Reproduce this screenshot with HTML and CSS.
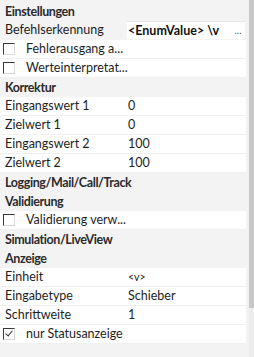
FILE: index.html
```html
<!DOCTYPE html>
<html>
<head>
    <meta charset="utf-8">
    <title>Eigenschaften</title>
    <link rel="stylesheet" href="styles.css">
</head>
<body>

<div class="grid_box">
    <div class="prop_list">
        <div class="cat">Einstellungen</div>
        <div class="row row_sel">
            <div class="lbl">Befehlserkennung</div>
            <div class="val val_edit"><b>&lt;EnumValue&gt; \v</b><span class="dots">...</span></div>
        </div>
        <div class="row">
            <div class="lbl chk_lbl"><span class="chk"></span>Fehlerausgang a...</div>
            <div class="val"></div>
        </div>
        <div class="row">
            <div class="lbl chk_lbl"><span class="chk"></span>Werteinterpretat...</div>
            <div class="val"></div>
        </div>
        <div class="cat">Korrektur</div>
        <div class="row">
            <div class="lbl">Eingangswert 1</div>
            <div class="val">0</div>
        </div>
        <div class="row">
            <div class="lbl">Zielwert 1</div>
            <div class="val">0</div>
        </div>
        <div class="row">
            <div class="lbl">Eingangswert 2</div>
            <div class="val">100</div>
        </div>
        <div class="row">
            <div class="lbl">Zielwert 2</div>
            <div class="val">100</div>
        </div>
        <div class="cat">Logging/Mail/Call/Track</div>
        <div class="cat">Validierung</div>
        <div class="row">
            <div class="lbl chk_lbl"><span class="chk"></span>Validierung verw...</div>
            <div class="val"></div>
        </div>
        <div class="cat">Simulation/LiveView</div>
        <div class="cat">Anzeige</div>
        <div class="row">
            <div class="lbl">Einheit</div>
            <div class="val small">&lt;v&gt;</div>
        </div>
        <div class="row">
            <div class="lbl">Eingabetype</div>
            <div class="val">Schieber</div>
        </div>
        <div class="row">
            <div class="lbl">Schrittweite</div>
            <div class="val">1</div>
        </div>
        <div class="row">
            <div class="lbl chk_lbl"><span class="chk chk_on"></span>nur Statusanzeige</div>
            <div class="val"></div>
        </div>
    </div>
    <div class="scroll_bar">
        <div class="scroll_thumb"></div>
    </div>
</div>

</body>
</html>
```

FILE: styles.css
```css
html, body{
    margin:0;
    padding:0;
    background:#f3f3f3;
}
body{
    font-family:Lato, "Noto Sans", sans-serif;
    font-size:12.5px;
    color:#1e1e1e;
}
.grid_box{
    display:flex;
    height:357px;
}
.prop_list{
    flex:1;
    padding-top:2px;
    padding-right:2px;
}
.cat{
    height:19px;
    line-height:19px;
    padding-left:5px;
    letter-spacing:-0.4px;
    font-weight:bold;
    color:#2b2b2b;
    white-space:nowrap;
}
.row{
    display:flex;
    height:18px;
    line-height:18px;
    border-bottom:1px solid #f0f0f0;
    background:#fff;
}
.lbl{
    width:122px;
    padding-left:5px;
    white-space:nowrap;
}
.val{
    flex:1;
    padding-left:1px;
    white-space:nowrap;
    overflow:hidden;
}
.small{
    font-size:10.5px;
}
.row_sel{
    background:#f3f3f3;
    border-bottom-color:#f3f3f3;
}
.val_edit{
    display:flex;
    background:#fff;
    border-top:1px solid #e6e6e6;
    margin-right:1px;
    line-height:17px;
}
.val_edit b{
    flex:1;
    color:#111;
}
.dots{
    width:14px;
    font-size:10px;
    color:#555;
    text-align:center;
}
.chk_lbl{
    display:flex;
    align-items:center;
    padding-left:3px;
    width:124px;
}
.chk{
    width:10px;
    height:10px;
    border-top:1px solid #3a3a3a;
    border-left:1px solid #3a3a3a;
    border-right:1px solid #d8d8d8;
    border-bottom:1px solid #d8d8d8;
    margin-right:11px;
    position:relative;
    flex:none;
}
.chk_on::after{
    content:"";
    position:absolute;
    left:3px;
    top:0;
    width:3px;
    height:6px;
    border-right:1px solid #333;
    border-bottom:1px solid #333;
    transform:rotate(40deg);
}
.scroll_bar{
    width:5px;
    background:#ededed;
    margin-left:1px;
}
.scroll_thumb{
    height:308px;
    background:#c9c9c9;
}
```
